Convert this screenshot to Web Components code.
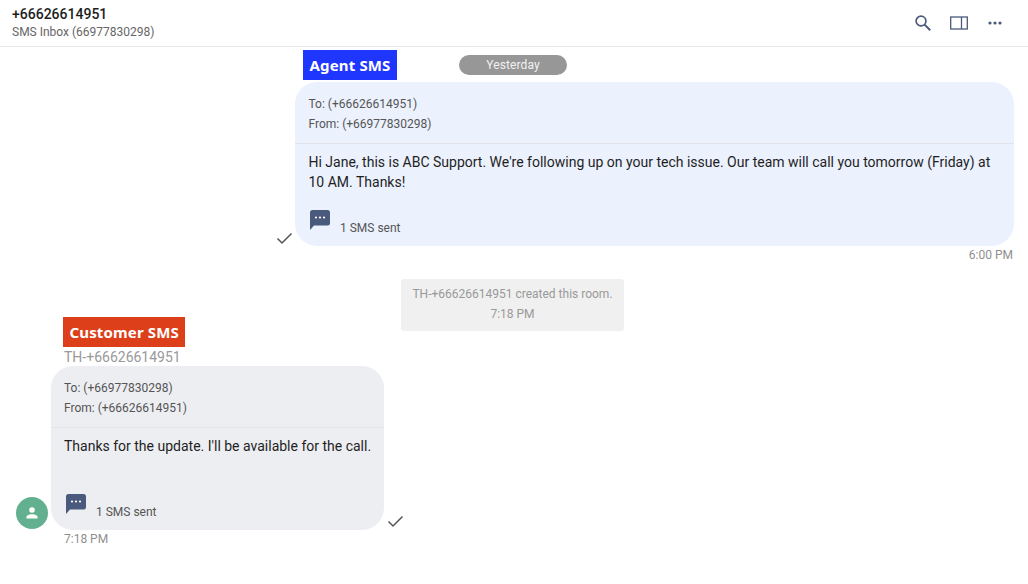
<!DOCTYPE html>
<html>
<head>
<meta charset="utf-8">
<style>
  html, body { margin: 0; height: 100%; background: #fff; overflow: hidden; }
  body { font-family: Roboto, "Liberation Sans", sans-serif; }
</style>
</head>
<body>
<chat-room>
  <room-header slot="header" phone="+66626614951" inbox="SMS Inbox (66977830298)"></room-header>
  <chat-message side="out" to="(+66626614951)" from="(+66977830298)" time="6:00 PM" tag="Agent SMS"
    text="Hi Jane, this is ABC Support. We're following up on your tech issue. Our team will call you tomorrow (Friday) at 10 AM. Thanks!"></chat-message>
  <room-notice text="TH-+66626614951 created this room." time="7:18 PM"></room-notice>
  <chat-message side="in" to="(+66977830298)" from="(+66626614951)" time="7:18 PM" tag="Customer SMS" sender="TH-+66626614951"
    text="Thanks for the update. I'll be available for the call."></chat-message>
</chat-room>

<script>
const ICON_COLOR = '#4a5a7c';

class ChatRoom extends HTMLElement {
  constructor() {
    super();
    this.attachShadow({ mode: 'open' });
    this.shadowRoot.innerHTML = `
      <style>
        :host { display: block; width: 1028px; height: 584px; position: relative; }
        .feed { display: flex; flex-direction: column; padding-top: 35px; }
        .day {
          position: absolute; left: 459px; top: 55px; width: 108px; height: 20px;
          border-radius: 10px; background: #979797; color: #f1f1f1;
          font-size: 12px; letter-spacing: .1px; line-height: 20px; text-align: center;
        }
      </style>
      <slot name="header"></slot>
      <div class="feed"><slot></slot></div>
      <div class="day">Yesterday</div>
    `;
  }
}

class RoomHeader extends HTMLElement {
  constructor() {
    super();
    this.attachShadow({ mode: 'open' });
    this.shadowRoot.innerHTML = `
      <style>
        :host {
          display: flex; align-items: center; justify-content: space-between; box-sizing: border-box;
          height: 47px; padding: 0 26px 0 12px; border-bottom: 1px solid #e6e6e6;
        }
        .phone { font-size: 14px; font-weight: 500; line-height: 16px; color: #1c1c1c; }
        .inbox { font-size: 12px; line-height: 16px; color: #666; margin-top: 2px; }
        .tools { display: flex; align-items: center; }
        svg { display: block; }
      </style>
      <div>
        <div class="phone">${this.getAttribute('phone')}</div>
        <div class="inbox">${this.getAttribute('inbox')}</div>
      </div>
      <div class="tools">
        <svg width="16" height="16" viewBox="0 0 16 16" fill="none" stroke="${ICON_COLOR}" stroke-width="1.7">
          <circle cx="6" cy="6" r="4.9"/><path d="M9.6 9.6 L15.2 15.2" stroke-width="2"/>
        </svg>
        <svg style="margin-left:19px" width="18" height="14" viewBox="0 0 18 14" fill="none" stroke="${ICON_COLOR}" stroke-width="1.3">
          <rect x=".7" y="1" width="16.6" height="12"/><path d="M11.5 1 V13"/>
        </svg>
        <svg style="margin-left:20px" width="14" height="6" viewBox="0 0 14 6" fill="${ICON_COLOR}">
          <circle cx="2" cy="3" r="1.6"/><circle cx="7" cy="3" r="1.6"/><circle cx="12" cy="3" r="1.6"/>
        </svg>
      </div>
    `;
  }
}

class ChatMessage extends HTMLElement {
  constructor() {
    super();
    this.attachShadow({ mode: 'open' });
    const out = this.getAttribute('side') === 'out';
    const sender = this.getAttribute('sender');
    const check = `<svg class="check" width="18" height="14" viewBox="0 0 18 14" fill="none" stroke="#555" stroke-width="1.5"><path d="M2.5 7.5 L7 12 L16.5 2.5"/></svg>`;
    this.shadowRoot.innerHTML = `
      <style>
        :host { display: block; position: relative; }
        .row { display: flex; align-items: flex-end; }
        :host([side=out]) .row { justify-content: flex-end; padding-right: 14px; }
        :host([side=in]) .row { padding-left: 16px; }
        .check { flex: none; }
        :host([side=out]) .check { margin: 0 2px 1px 0; }
        :host([side=in]) .check { margin: 0 0 2px 2px; }
        .avatar {
          flex: none; width: 32px; height: 32px; border-radius: 50%; background: #62b08f;
          display: flex; align-items: center; justify-content: center; margin: 0 3px 1px 0;
        }
        .bubble { box-sizing: border-box; height: 164px; border-radius: 22px; color: #1f1f1f; }
        :host([side=out]) .bubble { width: 719px; background: #ebf1fd; }
        :host([side=in]) .bubble { width: 333px; background: #edeef2; }
        .meta { padding: 12px 13px 9px 13.5px; border-bottom: 1px solid #e2e4e9; font-size: 12px; line-height: 20px; color: #555; height: 40px; }
        .text { padding: 8px 10px 0 13.5px; height: 48px; font-size: 14px; line-height: 20px; }
        :host([side=out]) .text { padding-right: 13.5px; }
        :host([side=in]) .meta, :host([side=in]) .text { padding-left: 13px; }
        .count { display: flex; align-items: flex-start; padding: 10px 0 0 15px; font-size: 12px; color: #555; line-height: 16px; }
        .count svg { margin-right: 10px; }
        .count span { margin-top: 10px; }
        .time { font-size: 12px; line-height: 16px; color: #8f8f8f; margin-top: 1px; }
        :host([side=out]) .time { text-align: right; padding-right: 15px; }
        :host([side=in]) .time { padding-left: 64px; }
        .sender { font-size: 14px; line-height: 17px; color: #999; padding-left: 64px; }
        .tag {
          position: absolute; height: 30px; line-height: 30px; padding: 0 6.5px; color: #fff;
          font-family: "Noto Sans", "Open Sans", sans-serif; font-size: 15px; font-weight: 700; letter-spacing: .15px;
        }
        :host([side=out]) .tag { left: 303px; top: -32px; background: #1f36ff; }
        :host([side=in]) .tag { left: 63px; top: -32px; background: #dc3f19; }
      </style>
      <div class="tag">${this.getAttribute('tag')}</div>
      ${sender ? `<div class="sender">${sender}</div>` : ''}
      <div class="row">
        ${out ? check : `<div class="avatar"><svg width="14" height="14" viewBox="0 0 14 14" fill="#fff"><circle cx="7" cy="4" r="2.8"/><path d="M1.5 12.5 V11 C1.5 9 5 8.2 7 8.2 S12.5 9 12.5 11 V12.5 Z"/></svg></div>`}
        <div class="bubble">
          <div class="meta">To: ${this.getAttribute('to')}<br>From: ${this.getAttribute('from')}</div>
          <div class="text">${this.getAttribute('text')}</div>
          <div class="count">
            <svg width="20" height="20" viewBox="0 0 20 20"><path fill="${ICON_COLOR}" d="M2.5 0 H17.5 A2.5 2.5 0 0 1 20 2.5 V13 A2.5 2.5 0 0 1 17.5 15.5 H4 L0 20 V2.5 A2.5 2.5 0 0 1 2.5 0 Z"/><g fill="#fff"><circle cx="6" cy="7.5" r="1.1"/><circle cx="10" cy="7.5" r="1.1"/><circle cx="14" cy="7.5" r="1.1"/></g></svg>
            <span>1 SMS sent</span>
          </div>
        </div>
        ${out ? '' : check}
      </div>
      <div class="time">${this.getAttribute('time')}</div>
    `;
  }
}

class RoomNotice extends HTMLElement {
  constructor() {
    super();
    this.attachShadow({ mode: 'open' });
    this.shadowRoot.innerHTML = `
      <style>
        :host { display: block; margin: 16px 0 18px; }
        .box {
          box-sizing: border-box; width: 223px; height: 52px; margin-left: 401px; padding-top: 5px;
          border-radius: 3px; background: #f0f0f0; color: #999; font-size: 12px; line-height: 20px;
          text-align: center;
        }
      </style>
      <div class="box">${this.getAttribute('text')}<br>${this.getAttribute('time')}</div>
    `;
  }
}

customElements.define('chat-room', ChatRoom);
customElements.define('room-header', RoomHeader);
customElements.define('chat-message', ChatMessage);
customElements.define('room-notice', RoomNotice);
</script>
</body>
</html>
